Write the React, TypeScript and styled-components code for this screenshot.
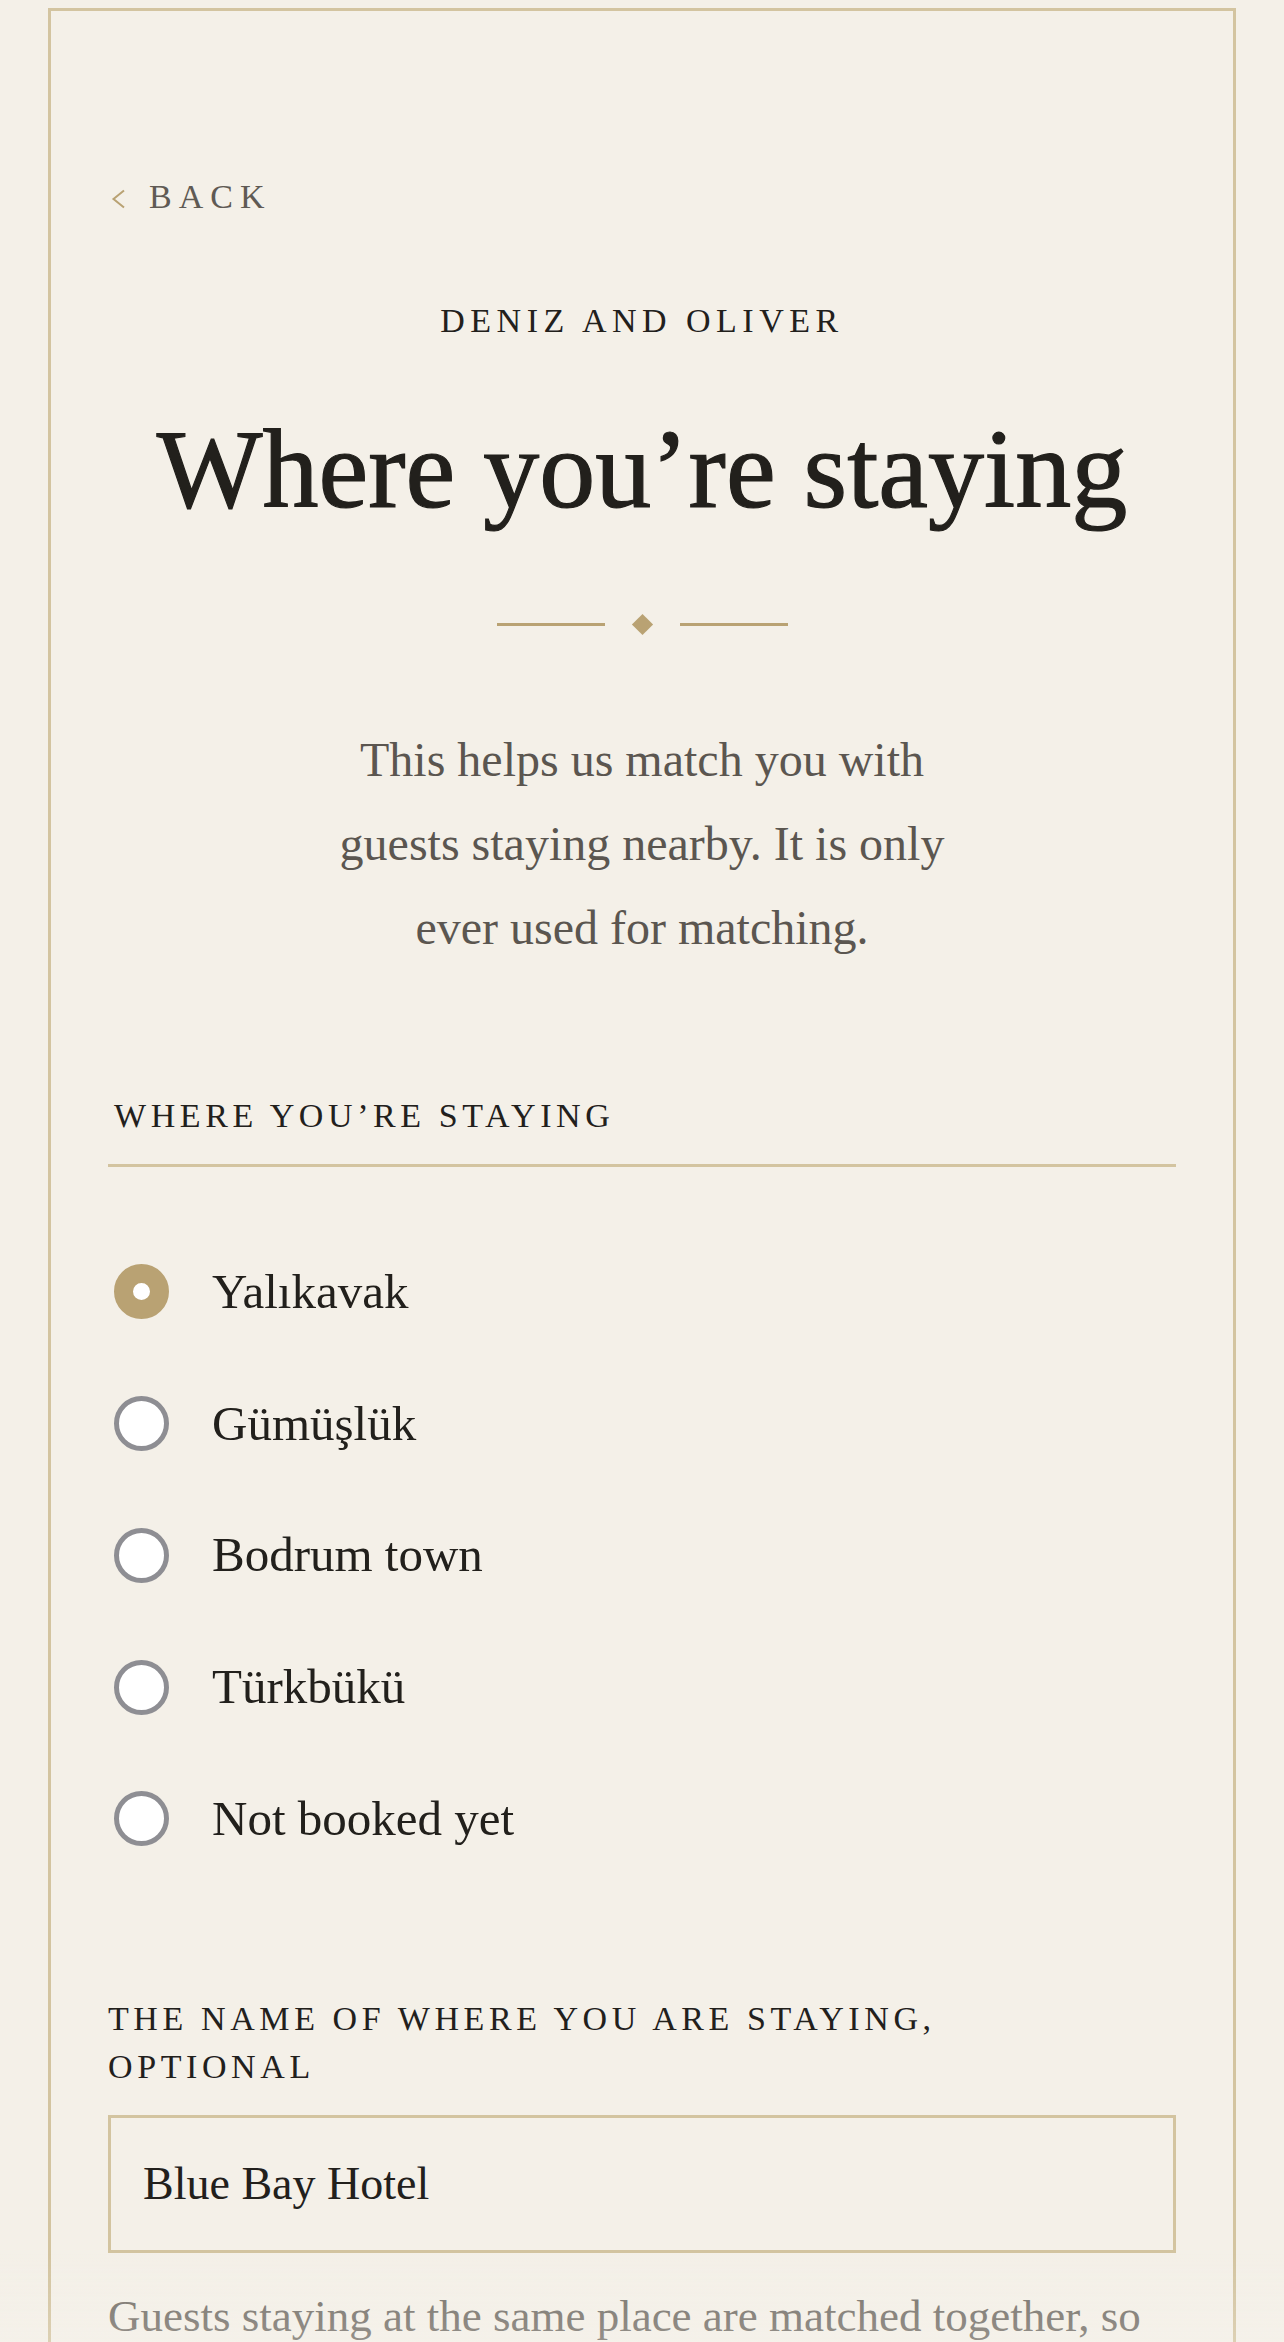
import { useState } from 'react'
import styled, { createGlobalStyle } from 'styled-components'

const GlobalStyle = createGlobalStyle`
  html, body {
    margin: 0;
    padding: 0;
    background: #f4f0e8;
  }
  body {
    font-family: 'Liberation Serif', 'DejaVu Serif', serif;
    color: #22201c;
  }
  * {
    box-sizing: border-box;
  }
`

const Page = styled.div`
  min-height: 100vh;
  padding: 8px 48px 0;
`

const Card = styled.main`
  border: 3px solid #d3c4a0;
  border-bottom: none;
  padding: 166px 57px 120px;
  display: flex;
  flex-direction: column;
`

const BackLink = styled.a`
  display: flex;
  align-items: center;
  gap: 23px;
  height: 40px;
  font-size: 34px;
  line-height: 40px;
  letter-spacing: 7px;
  color: #5f5a54;
  text-decoration: none;
  text-transform: uppercase;
  cursor: pointer;
  padding-left: 3px;
`

const Chevron = styled.svg`
  width: 15px;
  height: 20px;
  margin-top: 4px;
  flex-shrink: 0;
`

const Couple = styled.p`
  margin: 84px 0 0;
  text-align: center;
  font-size: 34px;
  line-height: 40px;
  letter-spacing: 5.5px;
  text-transform: uppercase;
  color: #22201c;
`

const Title = styled.h1`
  margin: 63px 0 0;
  text-align: center;
  font-size: 112px;
  line-height: 130px;
  font-weight: 400;
  color: #22201c;
  -webkit-text-stroke: 1.2px #22201c;
`

const Divider = styled.div`
  margin-top: 80px;
  height: 21px;
  display: flex;
  align-items: center;
  justify-content: center;
  gap: 30px;
`

const DividerLine = styled.span`
  width: 108px;
  height: 3px;
  background: #b9a273;
`

const Diamond = styled.span`
  width: 15px;
  height: 15px;
  background: #b9a273;
  transform: rotate(45deg);
`

const Intro = styled.p`
  margin: 83px auto 0;
  max-width: 620px;
  text-align: center;
  font-size: 48px;
  line-height: 84px;
  color: #5b5650;
`

const Fieldset = styled.fieldset`
  margin: 126px 0 0;
  padding: 0;
  border: none;
  min-width: 0;
`

const Legend = styled.legend`
  display: block;
  width: 100%;
  padding: 0 0 28px 6px;
  border-bottom: 3px solid #d3c4a0;
  font-size: 34px;
  line-height: 40px;
  letter-spacing: 4.6px;
  text-transform: uppercase;
  color: #22201c;
`

const Options = styled.div`
  margin-top: 59px;
  display: flex;
  flex-direction: column;
`

const Option = styled.label`
  height: 131.75px;
  display: flex;
  align-items: center;
  gap: 43px;
  padding-left: 6px;
  cursor: pointer;
`

const Radio = styled.input`
  appearance: none;
  -webkit-appearance: none;
  margin: 0;
  width: 55px;
  height: 55px;
  flex-shrink: 0;
  border-radius: 50%;
  border: 5px solid #8e8e93;
  background: #ffffff;
  cursor: pointer;

  &:checked {
    border: 19px solid #b9a273;
  }
`

const OptionText = styled.span`
  font-size: 49px;
  line-height: 60px;
  color: #22201c;
`

const FieldLabel = styled.label`
  display: block;
  margin-top: 110px;
  max-width: 900px;
  font-size: 34px;
  line-height: 48px;
  letter-spacing: 4.6px;
  text-transform: uppercase;
  color: #22201c;
`

const TextInput = styled.input`
  display: block;
  width: 100%;
  height: 138px;
  margin-top: 24px;
  padding: 0 32px;
  border: 3px solid #d3c4a0;
  border-radius: 0;
  background: transparent;
  font-family: 'Liberation Serif', 'DejaVu Serif', serif;
  font-size: 46px;
  color: #22201c;
  outline: none;
`

const Hint = styled.p`
  margin: 27px 0 0;
  font-size: 45px;
  line-height: 72px;
  color: #736e67;
`

const BottomFade = styled.div`
  position: fixed;
  left: 0;
  right: 0;
  bottom: 0;
  height: 90px;
  pointer-events: none;
  background: linear-gradient(
    to bottom,
    rgba(248, 245, 238, 0),
    rgba(249, 246, 240, 0.25)
  );
`

const places = ['Yalıkavak', 'Gümüşlük', 'Bodrum town', 'Türkbükü', 'Not booked yet']

export default function App() {
  const [place, setPlace] = useState('Yalıkavak')
  const [hotel, setHotel] = useState('Blue Bay Hotel')

  return (
    <>
      <GlobalStyle />
      <Page>
        <Card>
          <BackLink>
            <Chevron viewBox="0 0 15 20">
              <path d="M13 1.5 L2.5 10 L13 18.5" fill="none" stroke="#b9a273" strokeWidth="2" />
            </Chevron>
            Back
          </BackLink>

          <Couple>Deniz and Oliver</Couple>
          <Title>Where you’re staying</Title>

          <Divider>
            <DividerLine />
            <Diamond />
            <DividerLine />
          </Divider>

          <Intro>
            This helps us match you with guests staying nearby. It is only ever used for matching.
          </Intro>

          <Fieldset>
            <Legend>Where you’re staying</Legend>
            <Options>
              {places.map(p => (
                <Option key={p}>
                  <Radio
                    type="radio"
                    name="place"
                    checked={place === p}
                    onChange={() => setPlace(p)}
                  />
                  <OptionText>{p}</OptionText>
                </Option>
              ))}
            </Options>
          </Fieldset>

          <FieldLabel htmlFor="hotel">The name of where you are staying, optional</FieldLabel>
          <TextInput id="hotel" value={hotel} onChange={e => setHotel(e.target.value)} />
          <Hint>
            Guests staying at the same place are matched together, so you can share a ride to the
            celebrations.
          </Hint>
        </Card>
        <BottomFade />
      </Page>
    </>
  )
}
